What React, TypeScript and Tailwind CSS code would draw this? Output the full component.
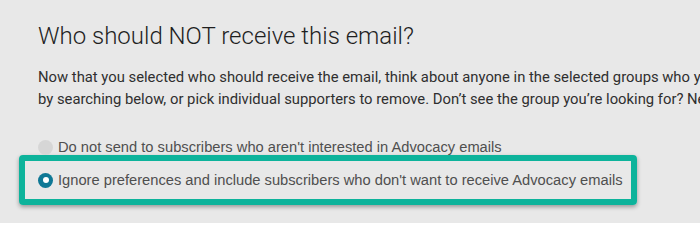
const Radio = ({ checked }: { checked?: boolean }) =>
  checked ? (
    <span className="flex h-[15px] w-[15px] shrink-0 items-center justify-center rounded-full bg-[#0f7895]">
      <span className="h-[6px] w-[6px] rounded-full bg-white" />
    </span>
  ) : (
    <span className="h-[15px] w-[15px] shrink-0 rounded-full bg-[#d6d6d6]" />
  );

export default function App() {
  return (
    <div className="h-[223px] w-[700px] overflow-hidden bg-[#e8e8e8]">
      <div className="pt-[22px]">
        {/* Heading + intro */}
        <div className="pl-[38px] font-['Roboto',sans-serif]">
          <h1 className="text-[24px] font-light leading-[28px] text-[#1f1f1f]">
            Who should NOT receive this email?
          </h1>
          <p className="mt-[16px] text-[14.8px] leading-[22px] text-[#2f2f2f] whitespace-nowrap">
            <span className="block">
              Now that you selected who should receive the email, think about anyone in the selected groups who you'd like to exclude.
            </span>
            <span className="block">
              by searching below, or pick individual supporters to remove. Don’t see the group you’re looking for? Need help?
            </span>
          </p>
        </div>

        {/* Preference options */}
        <div className="mt-[28px] font-['Liberation_Sans',Arial,sans-serif] text-[14.7px] text-[#4f4f4f] whitespace-nowrap">
          <label className="flex items-center gap-[5px] pl-[38px] leading-[18px]">
            <Radio />
            <span>Do not send to subscribers who aren't interested in Advocacy emails</span>
          </label>
          <div className="ml-[19px] -mt-[1px] w-[618px] rounded-[4px] border-[6px] border-[#0db39b] pt-[9px] pb-[9px] pl-[13px] shadow-[0_2px_4px_rgba(0,0,0,0.35)]">
            <label className="flex items-center gap-[5px] leading-[20px]">
              <Radio checked />
              <span>Ignore preferences and include subscribers who don't want to receive Advocacy emails</span>
            </label>
          </div>
        </div>
      </div>
    </div>
  );
}
